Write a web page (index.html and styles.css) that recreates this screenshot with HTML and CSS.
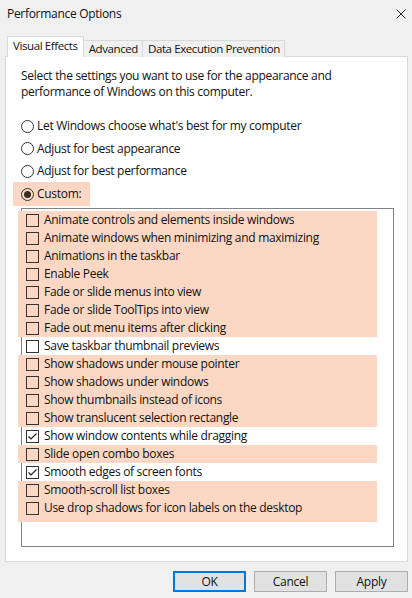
FILE: index.html
```html
<!DOCTYPE html>
<html>
<head>
<meta charset="utf-8">
<link rel="stylesheet" href="styles.css">
</head>
<body>
<div class="window">
  <div class="titlebar">
    <span class="title">Performance Options</span>
    <svg class="close" width="10" height="10" viewBox="0 0 10 10"><path d="M0.5 0.5L9.5 9.5M9.5 0.5L0.5 9.5" stroke="#222" stroke-width="1" fill="none"/></svg>
  </div>
  <div class="tabs">
    <div class="tab active">Visual Effects</div>
    <div class="tab">Advanced</div>
    <div class="tab">Data Execution Prevention</div>
  </div>
  <div class="panel">
    <p class="desc">Select the settings you want to use for the appearance and<br>performance of Windows on this computer.</p>
    <div class="radios">
      <div class="radio"><span class="rb"></span><span>Let Windows choose what's best for my computer</span></div>
      <div class="radio"><span class="rb"></span><span>Adjust for best appearance</span></div>
      <div class="radio"><span class="rb"></span><span>Adjust for best performance</span></div>
      <div class="radio custom"><span class="rb on"></span><span>Custom:</span></div>
    </div>
    <div class="list">
      <div class="group hl">
        <div class="row"><span class="cb"></span><span>Animate controls and elements inside windows</span></div>
        <div class="row"><span class="cb"></span><span>Animate windows when minimizing and maximizing</span></div>
        <div class="row"><span class="cb"></span><span>Animations in the taskbar</span></div>
        <div class="row"><span class="cb"></span><span>Enable Peek</span></div>
        <div class="row"><span class="cb"></span><span>Fade or slide menus into view</span></div>
        <div class="row"><span class="cb"></span><span>Fade or slide ToolTips into view</span></div>
        <div class="row"><span class="cb"></span><span>Fade out menu items after clicking</span></div>
      </div>
      <div class="group">
        <div class="row"><span class="cb"></span><span>Save taskbar thumbnail previews</span></div>
      </div>
      <div class="group hl">
        <div class="row"><span class="cb"></span><span>Show shadows under mouse pointer</span></div>
        <div class="row"><span class="cb"></span><span>Show shadows under windows</span></div>
        <div class="row"><span class="cb"></span><span>Show thumbnails instead of icons</span></div>
        <div class="row"><span class="cb"></span><span>Show translucent selection rectangle</span></div>
      </div>
      <div class="group">
        <div class="row"><span class="cb"><svg width="11" height="11" viewBox="0 0 11 11"><path d="M1.5 5.5L4 8L9.5 2.5" stroke="#222" stroke-width="1.2" fill="none"/></svg></span><span>Show window contents while dragging</span></div>
      </div>
      <div class="group hl">
        <div class="row"><span class="cb"></span><span>Slide open combo boxes</span></div>
      </div>
      <div class="group">
        <div class="row"><span class="cb"><svg width="11" height="11" viewBox="0 0 11 11"><path d="M1.5 5.5L4 8L9.5 2.5" stroke="#222" stroke-width="1.2" fill="none"/></svg></span><span>Smooth edges of screen fonts</span></div>
      </div>
      <div class="group hl last">
        <div class="row"><span class="cb"></span><span>Smooth-scroll list boxes</span></div>
        <div class="row"><span class="cb"></span><span>Use drop shadows for icon labels on the desktop</span></div>
      </div>
    </div>
  </div>
  <div class="buttons">
    <div class="btn default">OK</div>
    <div class="btn">Cancel</div>
    <div class="btn">Apply</div>
  </div>
</div>
</body>
</html>
```
FILE: styles.css
```css
html, body {
  margin: 0;
  padding: 0;
}
body {
  background: #f0f0f0;
  font-family: "Open Sans", "Noto Sans", sans-serif;
  font-size: 12px;
  line-height: 16px;
  letter-spacing: -0.3px;
  color: #111;
  width: 412px;
  height: 598px;
  overflow: hidden;
}
.window {
  width: 412px;
  height: 598px;
}
.titlebar {
  height: 28px;
  display: flex;
  align-items: center;
  justify-content: space-between;
  padding: 0 6px 0 7px;
}
.title {
  font-size: 12px;
}
.close {
  display: block;
}
.tabs {
  display: flex;
  align-items: flex-end;
  margin-top: 8px;
  padding-left: 7px;
  height: 21px;
  margin-bottom: -1px;
}
.tab {
  box-sizing: border-box;
  height: 17px;
  border: 1px solid #d9d9d9;
  border-bottom: none;
  background: #f0f0f0;
  padding: 0 4px 0 5px;
  font-size: 11.5px;
  line-height: 15px;
  white-space: nowrap;
  letter-spacing: -0.4px;
  flex: none;
}
.tab + .tab {
  border-left: none;
}
.tab.active {
  position: relative;
  z-index: 1;
  height: 21px;
  background: #fff;
  line-height: 18px;
  padding: 0 5px 0 5px;
}
.panel {
  box-sizing: border-box;
  margin-left: 5px;
  width: 403px;
  height: 506px;
  background: #fff;
  border: 1px solid #d9d9d9;
  padding: 11px 14px 0 15px;
}
.desc {
  margin: 0;
}
.radios {
  margin-top: 15px;
}
.radio {
  display: flex;
  align-items: center;
  height: 22px;
  gap: 3px;
  white-space: nowrap;
}
.radio + .radio {
  margin-top: 0.5px;
}
.rb {
  box-sizing: border-box;
  width: 13px;
  height: 13px;
  border: 1px solid #333;
  border-radius: 50%;
  display: flex;
  align-items: center;
  justify-content: center;
  flex: none;
}
.rb.on::after {
  content: "";
  width: 7px;
  height: 7px;
  border-radius: 50%;
  background: #3a2a24;
}
.radio.custom {
  box-sizing: border-box;
  width: 77px;
  height: 24px;
  margin: 0 0 -1px -8px;
  padding-left: 8px;
  background: #fcd8c4;
}
.list {
  box-sizing: border-box;
  margin-top: 3px;
  width: 373px;
  height: 339px;
  border: 1px solid #828282;
  padding-top: 2px;
}
.group.hl {
  margin-left: -4px;
  padding-left: 4px;
  width: 359px;
  box-sizing: border-box;
  background: #fcd8c4;
}
.group.last {
  padding-bottom: 5px;
}
.row {
  display: flex;
  align-items: center;
  height: 18px;
  gap: 5px;
  padding-left: 4px;
  white-space: nowrap;
}
.cb {
  box-sizing: border-box;
  width: 13px;
  height: 13px;
  border: 1px solid #333;
  flex: none;
  display: flex;
  align-items: center;
  justify-content: center;
}
.cb svg {
  display: block;
}
.buttons {
  display: flex;
  justify-content: flex-end;
  gap: 8px;
  margin-top: 9px;
  padding-right: 4px;
}
.btn {
  box-sizing: border-box;
  width: 73px;
  height: 21px;
  background: #e1e1e1;
  border: 1px solid #adadad;
  text-align: center;
  line-height: 19px;
}
.btn.default {
  border-color: #0078d7;
  box-shadow: inset 0 0 0 1px #0078d7;
}
```
